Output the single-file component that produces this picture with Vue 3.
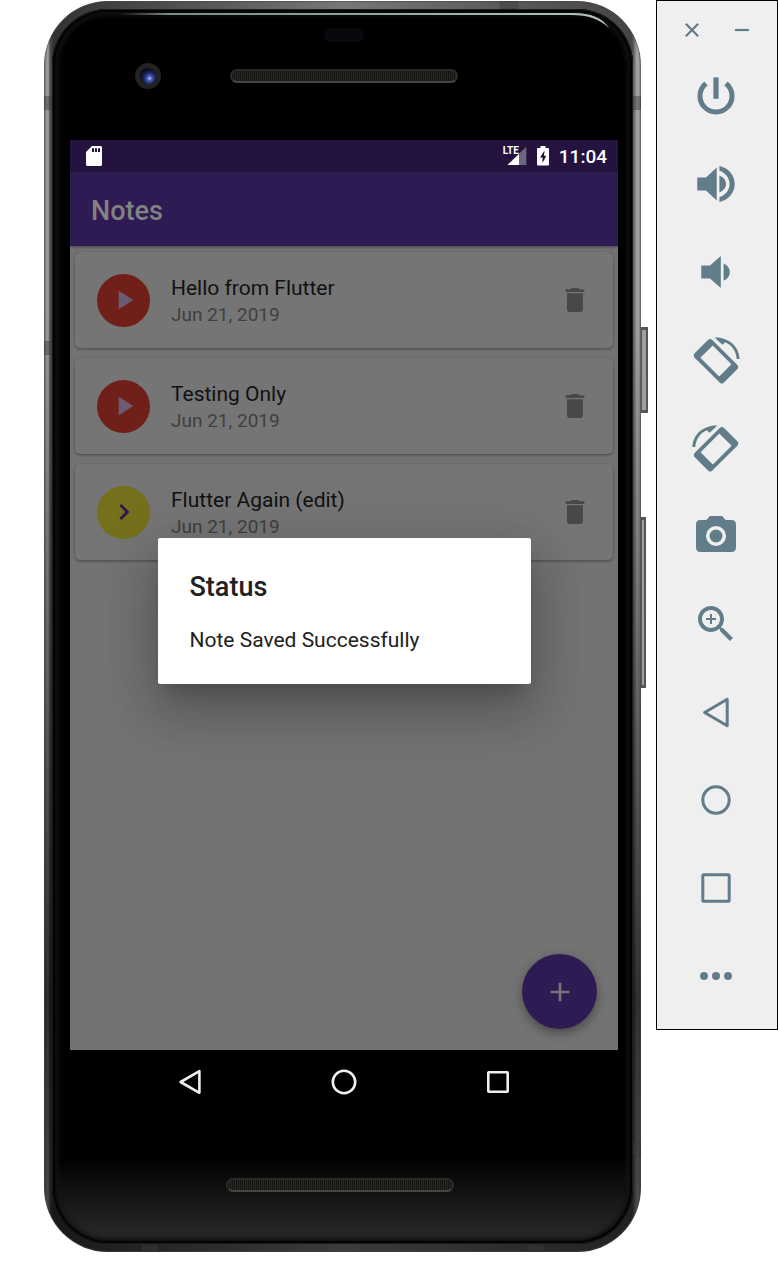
<script setup>
import { ref } from 'vue'

const notes = ref([
  { id: 1, title: 'Hello from Flutter', date: 'Jun 21, 2019', kind: 'play' },
  { id: 2, title: 'Testing Only', date: 'Jun 21, 2019', kind: 'play' },
  { id: 3, title: 'Flutter Again (edit)', date: 'Jun 21, 2019', kind: 'open' },
])

const tools = [
  { label: 'Power', fill: 'M21.4 5.4h5.2v21.4h-5.2z', stroke: 'M34 11.5A16 16 0 1 1 14 11.5', width: 5 },
  {
    label: 'Volume up',
    fill: 'M5.3 17.4H14L24.7 7.6v32.8L14 30.4H5.3zM27.4 15.6c4 1.6 6.6 4.6 6.6 8.4s-2.6 6.8-6.6 8.4zM27.4 6C36 7.8 42.7 15 42.7 24S36 40.2 27.4 42v-4.8C33.4 35.3 37.6 30 37.6 24s-4.2-11.3-10.2-13.2z',
  },
  { label: 'Volume down', fill: 'M9.3 17.6H18L28.8 8v32L18 30.4H9.3zM31.6 15.4c3.8 1.6 6.2 4.7 6.2 8.6s-2.4 7-6.2 8.6z' },
  {
    label: 'Rotate left',
    fill: 'M20.5 4.2a3.4 3.4 0 0 0-4.8 0L2.9 17.1a3.4 3.4 0 0 0 0 4.8L27.4 46.2a3.4 3.4 0 0 0 4.8 0L45 33.4a3.4 3.4 0 0 0 0-4.8zM20.7 9.6L39.4 28.3 27.2 40.4 8.4 21.8zM22.6 1.4C35.5 1.2 47 9 47.6 23h-2.9C44 14.5 39.5 9 33.2 6.3l-2.8 2.5z',
  },
  {
    label: 'Rotate right',
    fill: 'M27.5 4.2a3.4 3.4 0 0 1 4.8 0L45.1 17.1a3.4 3.4 0 0 1 0 4.8L20.6 46.2a3.4 3.4 0 0 1-4.8 0L3 33.4a3.4 3.4 0 0 1 0-4.8zM27.3 9.6L8.6 28.3 20.8 40.4 39.6 21.8zM25.4 1.4C12.5 1.2 1 9 .4 23h2.9C4 14.5 8.5 9 14.8 6.3l2.8 2.5z',
  },
  {
    label: 'Take screenshot',
    fill: 'M18 4l-3.66 4H8c-2.2 0-4 1.8-4 4v24c0 2.2 1.8 4 4 4h32c2.2 0 4-1.8 4-4V12c0-2.2-1.8-4-4-4h-6.34L30 4zM24 34a10 10 0 1 1 0-20 10 10 0 0 1 0 20zM24 17.5a6.5 6.5 0 1 0 0 13 6.5 6.5 0 0 0 0-13z',
  },
  {
    label: 'Zoom',
    fill: 'M31 28h-1.59l-.55-.55C30.82 25.18 32 22.23 32 19c0-7.18-5.82-13-13-13S6 11.82 6 19s5.82 13 13 13c3.23 0 6.18-1.18 8.45-3.13l.55.55V31l10 9.98L40.98 38zM19 28c-4.97 0-9-4.03-9-9s4.03-9 9-9 9 4.03 9 9-4.03 9-9 9zM24 20h-4v4h-2v-4h-4v-2h4v-4h2v4h4z',
  },
  { label: 'Back', stroke: 'M35.2 11.2v26.6L12.6 24.5z', width: 3 },
  { label: 'Home', stroke: 'M24 10.8a13.2 13.2 0 1 0 0 26.4 13.2 13.2 0 1 0 0-26.4z', width: 3 },
  { label: 'Overview', stroke: 'M11.8 10.8h24.4a1 1 0 0 1 1 1v24.4a1 1 0 0 1-1 1H11.8a1 1 0 0 1-1-1V11.8a1 1 0 0 1 1-1z', width: 3 },
  { label: 'More', fill: 'M12 20a4 4 0 1 0 0 8 4 4 0 0 0 0-8zM24 20a4 4 0 1 0 0 8 4 4 0 0 0 0-8zM36 20a4 4 0 1 0 0 8 4 4 0 0 0 0-8z' },
]
</script>

<template>
  <div class="desk">
    <main class="phone">
      <span class="band band-left-top"></span>
      <span class="band band-left-mid"></span>
      <span class="band band-right-top"></span>
      <span class="band band-right-low"></span>
      <span class="band band-top"></span>
      <span class="band band-foot-left"></span>
      <span class="band band-foot-right"></span>
      <span class="key key-power"></span>
      <span class="key key-volume"></span>

      <div class="face">
        <svg class="shine" viewBox="0 0 490 16" preserveAspectRatio="xMaxYMin meet" aria-hidden="true">
          <defs>
            <linearGradient id="shine-fade" x1="0" x2="1" y1="0" y2="0">
              <stop offset="0" stop-color="#7d888b" stop-opacity="0" />
              <stop offset="0.1" stop-color="#7d888b" />
              <stop offset="1" stop-color="#b4c0c2" />
            </linearGradient>
          </defs>
          <path fill="url(#shine-fade)" d="M0 0h455c16 0 29 5 35 15C480 6 470 2 452 2H0z" />
        </svg>
        <div class="head">
          <span class="sensor"></span>
          <div class="head-row">
            <span class="camera"></span>
            <span class="speaker"></span>
          </div>
        </div>

        <div class="screen">
          <div class="status-bar">
            <svg width="16" height="20" viewBox="0 0 16 20" aria-hidden="true">
              <path fill="#fff" fill-rule="evenodd" d="M6 0h8.5A1.5 1.5 0 0 1 16 1.5v17a1.5 1.5 0 0 1-1.5 1.5h-13A1.5 1.5 0 0 1 0 18.5V6zM6 2.3V6h2V2.3zM9 2.3V6h2V2.3zM12 2.3V6h2V2.3z" />
            </svg>
            <div class="status-right">
              <span class="signal">
                <span class="lte">LTE</span>
                <svg width="24" height="20" viewBox="0 0 24 20" aria-hidden="true">
                  <path fill="#fff" fill-opacity=".35" d="M23.3.8V19H4.5z" />
                  <path fill="#fff" d="M16 8v11H4.5z" />
                </svg>
              </span>
              <svg width="12" height="20" viewBox="0 0 12 20" aria-hidden="true">
                <path fill="#fff" fill-rule="evenodd" d="M3.5 0h5v2H11a1 1 0 0 1 1 1v15.5a1 1 0 0 1-1 1H1a1 1 0 0 1-1-1V3a1 1 0 0 1 1-1h2.5zM7.5 4.5L3 11.5h2.5V17L9.3 9.8H7z" />
              </svg>
              <time>11:04</time>
            </div>
          </div>

          <div class="app">
            <header class="app-bar"><h1>Notes</h1></header>
            <ul class="notes">
              <li v-for="note in notes" :key="note.id" class="note">
                <span class="avatar" :class="note.kind">
                  <svg width="32" height="32" viewBox="0 0 24 24" aria-hidden="true">
                    <path v-if="note.kind === 'play'" d="M8 5v14l11-7z" />
                    <path v-else d="M10 6L8.59 7.41 13.17 12l-4.58 4.59L10 18l6-6z" />
                  </svg>
                </span>
                <div class="note-text">
                  <h2>{{ note.title }}</h2>
                  <p>{{ note.date }}</p>
                </div>
                <button class="delete" type="button" :aria-label="`Delete ${note.title}`">
                  <svg width="32" height="32" viewBox="0 0 24 24" aria-hidden="true">
                    <path fill="currentColor" d="M6 19c0 1.1.9 2 2 2h8c1.1 0 2-.9 2-2V7H6v12zM19 4h-3.5l-1-1h-5l-1 1H5v2h14V4z" />
                  </svg>
                </button>
              </li>
            </ul>
            <button class="fab" type="button" aria-label="Add note">
              <svg width="32" height="32" viewBox="0 0 24 24" aria-hidden="true">
                <path fill="currentColor" d="M19 13h-6v6h-2v-6H5v-2h6V5h2v6h6v2z" />
              </svg>
            </button>
            <div class="overlay">
              <section class="dialog" role="dialog" aria-labelledby="dialog-title">
                <h2 id="dialog-title">Status</h2>
                <p>Note Saved Successfully</p>
              </section>
            </div>
          </div>

          <nav class="nav">
            <button type="button" aria-label="Back">
              <svg width="32" height="32" viewBox="0 0 32 32" aria-hidden="true"><path d="M25.4 5.2v21.6L6.6 16z" /></svg>
            </button>
            <button type="button" aria-label="Home">
              <svg width="32" height="32" viewBox="0 0 32 32" aria-hidden="true"><circle cx="16" cy="16" r="11.2" /></svg>
            </button>
            <button type="button" aria-label="Overview">
              <svg width="32" height="32" viewBox="0 0 32 32" aria-hidden="true"><rect x="6.3" y="6.3" width="19.4" height="19.4" rx="0.5" /></svg>
            </button>
          </nav>
        </div>

        <div class="foot"><span class="speaker"></span></div>
      </div>
    </main>

    <aside class="toolbar" aria-label="Emulator controls">
      <div class="window-row">
        <button type="button" aria-label="Close">
          <svg width="16" height="16" viewBox="0 0 16 16" aria-hidden="true"><path d="M1.8 1.8l12.4 12.4M14.2 1.8L1.8 14.2" /></svg>
        </button>
        <button type="button" aria-label="Minimize">
          <svg width="16" height="16" viewBox="0 0 16 16" aria-hidden="true"><path d="M1 8h14" /></svg>
        </button>
      </div>
      <button v-for="tool in tools" :key="tool.label" class="tool" type="button" :aria-label="tool.label">
        <svg width="48" height="48" viewBox="0 0 48 48" aria-hidden="true">
          <path v-if="tool.fill" :d="tool.fill" fill="currentColor" fill-rule="evenodd" />
          <path v-if="tool.stroke" :d="tool.stroke" fill="none" stroke="currentColor" stroke-linejoin="round" :stroke-width="tool.width" />
        </svg>
      </button>
    </aside>
  </div>
</template>

<style>
body {
  background: #fff;
}
</style>

<style scoped>
.desk {
  display: flex;
  align-items: flex-start;
  gap: 15px;
  padding-left: 44px;
  font-family: Roboto, "Noto Sans", sans-serif;
}

h1,
h2,
p,
ul {
  margin: 0;
  padding: 0;
}

button {
  display: grid;
  place-items: center;
  padding: 0;
  border: 0;
  background: none;
  color: inherit;
}

svg {
  display: block;
}

.phone {
  position: relative;
  flex: 1;
  min-width: 0;
  box-sizing: border-box;
  margin-top: 1px;
  padding: 8px;
  border-radius: 64px;
  background:
    linear-gradient(to bottom, transparent 25%, rgba(0, 0, 0, 0.7) 80%, rgba(0, 0, 0, 0.5)),
    linear-gradient(to right, #777, #a0a0a0 4px, #505050 6px, #333 9px, #777 50%, #444 calc(100% - 9px), #666 calc(100% - 7px), #a8a8a8 calc(100% - 4px), #888);
  box-shadow: inset 0 0 1px 1px rgba(70, 70, 70, 0.6);
}

.face {
  position: relative;
  display: flex;
  flex-direction: column;
  padding: 0 15px 0 18px;
  border-radius: 56px;
  background: linear-gradient(to bottom, #000 93%, #141414 96%, #2c2c2c);
  box-shadow: inset 0 0 0 1px #1c1c1c, inset 0 0 2px 3px #000, inset 0 0 5px 6px #141414;
}

.shine {
  position: absolute;
  top: 4px;
  right: 24px;
  width: calc(100% - 91px);
  height: 16px;
}

.head {
  height: 131px;
}

.sensor {
  display: block;
  width: 40px;
  height: 14px;
  margin: 0 auto;
  position: relative;
  top: 19px;
  border-radius: 7px;
  background: #07090d;
}

.head-row {
  display: grid;
  grid-template-columns: 1fr auto 1fr;
  align-items: center;
  margin-top: 40px;
}

.camera {
  box-sizing: border-box;
  width: 26px;
  height: 26px;
  margin-left: 65px;
  border: 5px solid #222;
  border-radius: 50%;
  background: radial-gradient(circle at 60% 65%, #b8c4ff 0, #4257b5 18%, #17204f 45%, #090a14 70%);
}

.speaker {
  box-sizing: border-box;
  width: 228px;
  height: 14px;
  border: 2px solid #2a2a28;
  border-bottom-color: #454543;
  border-radius: 7px;
  background: repeating-linear-gradient(to right, #161411 0 1px, #2b2822 1px 2px);
}

.screen {
  display: flex;
  flex-direction: column;
}

.status-bar {
  display: flex;
  align-items: center;
  justify-content: space-between;
  height: 32px;
  box-sizing: border-box;
  padding: 0 11px 0 16px;
  background: #24133f;
  color: #fff;
}

.status-right {
  display: flex;
  align-items: center;
  gap: 10px;
}

.signal {
  position: relative;
}

.lte {
  position: absolute;
  top: 0;
  left: 0;
  font: bold 10px/10px "Liberation Sans Narrow", Roboto, sans-serif;
}

time {
  padding-top: 2px;
  font-size: 19px;
  font-weight: 500;
  line-height: 24px;
}

.app {
  position: relative;
  min-height: 878px;
  background: #737373;
}

.app-bar {
  position: relative;
  display: flex;
  align-items: center;
  box-sizing: border-box;
  height: 74px;
  padding: 3px 21px 0;
  background: #2f1b54;
  box-shadow: 0 1px 3px rgba(0, 0, 0, 0.4);
}

h1 {
  font-size: 27px;
  font-weight: 500;
  line-height: 32px;
  color: #828282;
}

.notes {
  display: flex;
  flex-direction: column;
  gap: 10px;
  padding: 6px 5px;
  list-style: none;
}

.note {
  display: flex;
  align-items: center;
  gap: 21px;
  height: 96px;
  box-sizing: border-box;
  padding: 0 22px;
  border-radius: 5px;
  background: #757575;
  box-shadow: 0 1px 3px rgba(0, 0, 0, 0.4);
}

.avatar {
  display: grid;
  place-items: center;
  width: 53px;
  height: 53px;
  border-radius: 50%;
}

.play {
  background: #701f19;
  fill: #695c73;
}

.open {
  background: #75701b;
  fill: #2b1450;
}

.note-text {
  flex: 1;
  min-width: 0;
  padding-top: 2px;
}

.note h2 {
  font-size: 21px;
  font-weight: 400;
  line-height: 28px;
  color: #111;
}

.note p {
  font-size: 19px;
  line-height: 26px;
  color: #404040;
}

.delete {
  color: #484848;
}

.fab {
  position: absolute;
  right: 21px;
  bottom: 21px;
  width: 75px;
  height: 75px;
  border-radius: 50%;
  background: #2f1b54;
  color: #757575;
  box-shadow: 0 5px 8px rgba(0, 0, 0, 0.25), 0 2px 14px rgba(0, 0, 0, 0.12);
}

.overlay {
  position: absolute;
  inset: 0;
  display: grid;
  place-items: center;
  overflow: hidden;
}

.dialog {
  box-sizing: border-box;
  width: 373px;
  max-width: 90%;
  padding: 32px;
  border-radius: 2px;
  background: #fff;
  color: #212121;
  box-shadow: 0 15px 20px -9px rgba(0, 0, 0, 0.2), 0 32px 50px 4px rgba(0, 0, 0, 0.14), 0 12px 60px 10px rgba(0, 0, 0, 0.12);
}

.dialog h2 {
  margin-bottom: 24px;
  font-size: 27px;
  font-weight: 500;
  line-height: 34px;
}

.dialog p {
  font-size: 21px;
  line-height: 24px;
}

.nav {
  display: flex;
  align-items: center;
  justify-content: center;
  gap: 122px;
  height: 64px;
  background: #000;
}

.nav svg {
  fill: none;
  stroke: #eee;
  stroke-width: 2.6;
  stroke-linejoin: round;
}

.foot {
  display: flex;
  justify-content: center;
  padding: 64px 8px 52px 0;
}

.band {
  position: absolute;
  background: rgba(60, 60, 60, 0.45);
  box-shadow: 0 0 0 1px rgba(40, 40, 40, 0.4);
}

.band-left-top,
.band-left-mid,
.band-right-top,
.band-right-low {
  width: 8px;
  height: 12px;
}

.band-left-top {
  top: 96px;
  left: 1px;
}

.band-left-mid {
  top: 341px;
  left: 1px;
}

.band-right-top {
  top: 96px;
  right: 1px;
}

.band-right-low {
  top: 1142px;
  right: 1px;
}

.band-top,
.band-foot-left,
.band-foot-right {
  width: 16px;
  height: 6px;
}

.band-top {
  top: 1px;
  right: 124px;
}

.band-foot-left {
  bottom: 1px;
  left: 98px;
}

.band-foot-right {
  right: 98px;
  bottom: 1px;
}

.key {
  position: absolute;
  left: 100%;
  box-sizing: border-box;
  border: 1px solid #555;
  border-width: 3px 2px 3px 1px;
  background: #a0a0a0;
}

.key-power {
  top: 326px;
  width: 7px;
  height: 86px;
}

.key-volume {
  top: 516px;
  width: 5px;
  height: 171px;
}

.toolbar {
  flex: none;
  box-sizing: border-box;
  width: 122px;
  padding-bottom: 9px;
  border: 1px solid #000;
  background: #efefef;
  color: #617d8a;
}

.window-row {
  display: flex;
  align-items: center;
  justify-content: center;
  gap: 34px;
  height: 51px;
  box-sizing: border-box;
  padding-top: 7px;
}

.window-row path {
  stroke: currentColor;
  stroke-width: 2.2;
}

.tool {
  width: 100%;
  height: 88px;
  padding-right: 2px;
}
</style>
